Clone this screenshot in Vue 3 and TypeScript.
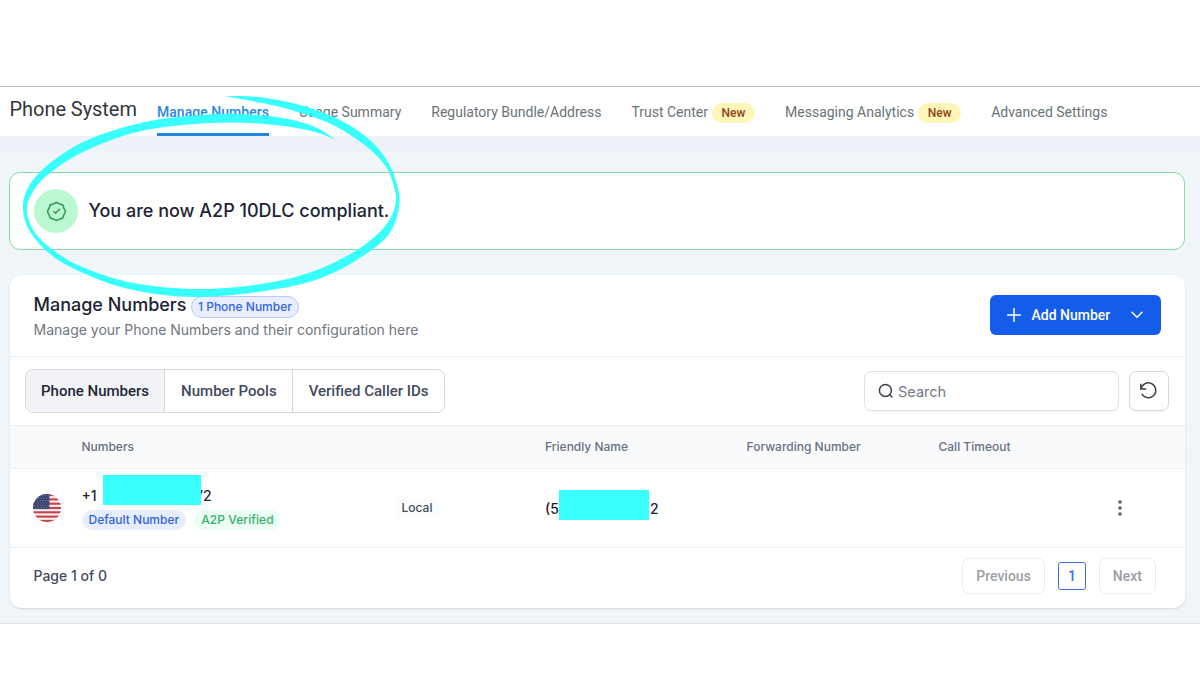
<template>
  <div class="page">
    <header class="topbar">
      <h1>Phone System</h1>
      <nav class="tabs">
        <a
          v-for="tab in tabs"
          :key="tab.label"
          class="tab"
          :class="{ active: tab.label === activeTab }"
          @click="activeTab = tab.label"
        >
          <span class="tab-label">{{ tab.label }}</span>
          <span v-if="tab.isNew" class="new-badge">New</span>
        </a>
      </nav>
    </header>

    <main class="content">
      <section class="banner">
        <span class="banner-icon">
          <svg width="21" height="21" viewBox="0 0 24 24">
            <path d="M9 12L11 14L15.5 9.5" />
            <path
              d="M7.334 3.819C8.138 3.755 8.901 3.438 9.514 2.915C10.947 1.695 13.053 1.695 14.486 2.915C15.099 3.438 15.862 3.755 16.666 3.819C18.542 3.968 20.032 5.458 20.181 7.334C20.246 8.138 20.562 8.901 21.085 9.514C22.305 10.947 22.305 13.053 21.085 14.486C20.562 15.099 20.246 15.862 20.181 16.666C20.032 18.542 18.542 20.032 16.666 20.181C15.862 20.246 15.099 20.562 14.486 21.085C13.053 22.305 10.947 22.305 9.514 21.085C8.901 20.562 8.138 20.246 7.334 20.181C5.458 20.032 3.968 18.542 3.819 16.666C3.755 15.862 3.438 15.099 2.915 14.486C1.695 13.053 1.695 10.947 2.915 9.514C3.438 8.901 3.755 8.138 3.819 7.334C3.968 5.458 5.458 3.968 7.334 3.819Z"
            />
          </svg>
        </span>
        <p>You are now A2P 10DLC compliant.</p>
      </section>

      <section class="card">
        <div class="card-header">
          <div>
            <div class="card-title">
              <h2>Manage Numbers</h2>
              <span class="count">1 Phone Number</span>
            </div>
            <p class="subtitle">Manage your Phone Numbers and their configuration here</p>
          </div>
          <button class="add-button">
            <svg width="14" height="14" viewBox="0 0 14 14"><path d="M7 .5v13M.5 7h13" /></svg>
            <span>Add Number</span>
            <svg width="12" height="8" viewBox="0 0 12 8"><path d="M1 1.2l5 5 5-5" /></svg>
          </button>
        </div>

        <div class="toolbar">
          <div class="segmented">
            <button
              v-for="view in views"
              :key="view"
              :class="{ selected: view === activeView }"
              @click="activeView = view"
            >
              {{ view }}
            </button>
          </div>
          <div class="tools">
            <div class="search">
              <svg width="16" height="16" viewBox="0 0 16 16">
                <circle cx="7.4" cy="7.4" r="6" />
                <path d="M11.8 11.8l2.2 2.2" />
              </svg>
              <span>Search</span>
            </div>
            <button class="refresh">
              <svg width="20" height="20" viewBox="0 0 20 20">
                <path d="M1.8 3.3v4.8h4.8" />
                <path d="M2.1 7.9A7.4 7.4 0 1 1 3.2 13.4" />
              </svg>
            </button>
          </div>
        </div>

        <div class="row head">
          <span></span>
          <span>Numbers</span>
          <span></span>
          <span>Friendly Name</span>
          <span>Forwarding Number</span>
          <span>Call Timeout</span>
          <span></span>
        </div>

        <div class="row body">
          <svg class="flag" width="28" height="28" viewBox="0 0 28 28">
            <clipPath id="flag-clip"><circle cx="14" cy="14" r="14" /></clipPath>
            <g clip-path="url(#flag-clip)">
              <rect width="28" height="28" fill="#f6f2f3" />
              <rect v-for="n in 7" :key="n" x="0" :y="(n - 1) * 4.31" width="28" height="2.15" fill="#c9434c" />
              <rect width="16.5" height="15.08" fill="#3a4670" />
              <template v-for="r in 6" :key="r">
                <circle v-for="c in 6" :key="c" :cx="c * 2.7 - (r % 2)" :cy="r * 2.4 - 0.7" r="0.45" fill="#b9c1d8" />
              </template>
            </g>
          </svg>
          <div class="number-cell">
            <div class="number">
              <span>+1</span>
              <i class="redacted wide"></i>
              <span class="tail">72</span>
            </div>
            <div class="pills">
              <span class="pill blue">Default Number</span>
              <span class="pill green">A2P Verified</span>
            </div>
          </div>
          <span class="local">Local</span>
          <div class="friendly">
            <span>(5</span>
            <i class="redacted"></i>
            <span>2</span>
          </div>
          <span></span>
          <span></span>
          <svg class="more" width="6" height="18" viewBox="0 0 6 18">
            <circle cx="3" cy="3" r="1.8" />
            <circle cx="3" cy="9" r="1.8" />
            <circle cx="3" cy="15" r="1.8" />
          </svg>
        </div>

        <footer class="pager">
          <span class="page-info">Page 1 of 0</span>
          <div class="pager-buttons">
            <button class="step">Previous</button>
            <button class="current">1</button>
            <button class="step">Next</button>
          </div>
        </footer>
      </section>
    </main>

    <svg class="swoosh" width="420" height="220" viewBox="0 80 420 220">
      <path :d="swoosh" fill="#38fffb" />
    </svg>
  </div>
</template>

<script setup lang="ts">
import { ref } from 'vue'

interface Tab {
  label: string
  isNew?: boolean
}

type Point = [number, number]

const tabs: Tab[] = [
  { label: 'Manage Numbers' },
  { label: 'Usage Summary' },
  { label: 'Regulatory Bundle/Address' },
  { label: 'Trust Center', isNew: true },
  { label: 'Messaging Analytics', isNew: true },
  { label: 'Advanced Settings' },
]
const views = ['Phone Numbers', 'Number Pools', 'Verified Caller IDs']

const activeTab = ref('Manage Numbers')
const activeView = ref('Phone Numbers')

// Both edges of the brush stroke, tip to tip
const outer: Point[] = [
  [225, 96], [258, 97], [300, 105], [340, 120], [371, 141], [389, 164], [397, 185], [399.5, 203],
  [393, 227], [377, 246], [333, 273], [283, 288], [200, 297], [133, 290], [83, 273], [50, 254],
  [29, 230], [23, 208], [27, 190], [40, 172], [67, 151], [100, 135], [150, 121], [200, 115],
  [240, 114], [283, 118], [315, 127], [336, 140],
]
const inner: Point[] = [
  [336, 140], [315, 132], [283, 126], [233, 122.5], [183, 125], [133, 133], [83, 152], [50, 173],
  [34, 190], [27, 208], [32, 228], [48, 246], [80, 266], [133, 283], [200, 289], [267, 283],
  [317, 270], [360, 248], [386, 225], [395.5, 204], [394, 187], [386, 167], [367, 147], [333, 125],
  [293, 110.5], [262, 103], [225, 96],
]

function smooth(points: Point[]) {
  let d = ''
  for (let i = 0; i < points.length - 1; i++) {
    const a = points[i - 1] ?? points[i]
    const b = points[i]
    const c = points[i + 1]
    const e = points[i + 2] ?? c
    d += `C${b[0] + (c[0] - a[0]) / 6} ${b[1] + (c[1] - a[1]) / 6} ${c[0] - (e[0] - b[0]) / 6} ${c[1] - (e[1] - b[1]) / 6} ${c[0]} ${c[1]}`
  }
  return d
}

const swoosh = `M225 96${smooth(outer)}${smooth(inner)}Z`
</script>

<style>
body {
  margin: 0;
  background: #fff;
}
</style>

<style scoped>
.page {
  position: relative;
  box-sizing: border-box;
  width: 1200px;
  height: 675px;
  padding-top: 86px;
  overflow: hidden;
  background: #fff;
  font-family: Inter, sans-serif;
  color: #1d2433;
}

h1,
h2,
p {
  margin: 0;
}

button {
  box-sizing: border-box;
  margin: 0;
  padding: 0;
  border: 0;
  background: #fff;
  font-family: Roboto, sans-serif;
}

svg {
  display: block;
  fill: none;
}

.topbar {
  box-sizing: border-box;
  display: flex;
  height: 50px;
  padding-left: 9.5px;
  border-top: 1px solid #bcc0c1;
  font-family: Roboto, sans-serif;
}

h1 {
  width: 147.5px;
  font-size: 20px;
  font-weight: 400;
  line-height: 44px;
  letter-spacing: -0.05px;
  white-space: nowrap;
  color: #33373b;
}

.tabs {
  display: flex;
  gap: 30px;
  height: 49px;
}

.tab {
  box-sizing: border-box;
  display: flex;
  align-items: center;
  gap: 4px;
  height: 49px;
  border-bottom: 3px solid transparent;
  font-size: 14px;
  white-space: nowrap;
  color: #6a7378;
}

.tab-label {
  margin-top: 4px;
}

.tab.active {
  font-weight: 500;
  letter-spacing: 0.03px;
  color: #2c86e4;
  border-color: #1f87dd;
}

.new-badge {
  width: 43px;
  margin-top: 5px;
  border-radius: 10px;
  background: #fdf6b8;
  font-size: 12px;
  font-weight: 500;
  line-height: 20px;
  text-align: center;
  color: #8f4518;
}

.content {
  box-sizing: border-box;
  height: 488px;
  padding: 36px 15.5px 0 9.5px;
  background: linear-gradient(#eef2f8 0, #eef2f8 14px, #f0f6fa 18px, #f0f5f9 100%);
  border-bottom: 1px solid #dde2e5;
}

.banner {
  box-sizing: border-box;
  display: flex;
  align-items: center;
  gap: 10.5px;
  height: 78px;
  margin-left: -0.5px;
  padding-left: 24px;
  border: 1px solid #84dda2;
  border-radius: 11px;
  background: #fff;
  font-size: 18px;
  font-weight: 500;
}

.banner p {
  margin-top: -2px;
}

.banner-icon {
  display: grid;
  place-items: center;
  width: 44px;
  height: 44px;
  border-radius: 50%;
  background: #bbf7d0;
}

.banner-icon svg {
  stroke: #2c9a58;
  stroke-width: 1.7;
  stroke-linecap: round;
  stroke-linejoin: round;
}

.card {
  height: 333px;
  margin-top: 25px;
  border-radius: 12px;
  background: #fff;
  box-shadow: 0 1px 2px rgba(40, 60, 80, 0.16);
}

.card-header {
  box-sizing: border-box;
  display: flex;
  justify-content: space-between;
  height: 82px;
  padding: 17px 24px 0;
  border-bottom: 1px solid #eceff2;
}

.card-title {
  display: flex;
  align-items: center;
  gap: 4.5px;
}

h2 {
  font-size: 18px;
  font-weight: 500;
  line-height: 24px;
}

.count {
  margin-top: 4px;
  padding: 0 6px;
  border: 1px solid #b7c8fa;
  border-radius: 11px;
  background: #e8edff;
  font-size: 12px;
  font-weight: 500;
  line-height: 20px;
  color: #2f65dc;
}

.subtitle {
  margin-top: 2px;
  font-size: 14px;
  line-height: 20px;
  color: #70757f;
}

.add-button {
  display: flex;
  align-items: center;
  width: 171px;
  height: 40px;
  margin-top: 3px;
  padding-left: 17px;
  border-radius: 6px;
  background: #145deb;
  font-size: 14px;
  font-weight: 500;
  color: #fff;
}

.add-button span {
  width: 99px;
  margin-left: 11px;
  text-align: left;
}

.add-button svg {
  stroke: #fff;
  stroke-width: 1.5;
  stroke-linecap: round;
  stroke-linejoin: round;
}

.toolbar {
  box-sizing: border-box;
  display: flex;
  align-items: center;
  justify-content: space-between;
  height: 69px;
  padding: 0 16px 0 15.5px;
  border-bottom: 1px solid #eceff2;
}

.segmented {
  display: flex;
  overflow: hidden;
  border: 1px solid #d5d8dc;
  border-radius: 8px;
}

.segmented button {
  height: 42px;
  padding: 0 15px 0 16px;
  border-left: 1px solid #d5d8dc;
  font-size: 15px;
  font-weight: 500;
  color: #434a5e;
}

.segmented button:first-child {
  padding-left: 15px;
  border-left: 0;
}

.segmented .selected {
  background: #f1f3f7;
  color: #222836;
}

.tools {
  display: flex;
  gap: 10px;
}

.search,
.refresh {
  box-sizing: border-box;
  height: 40px;
  border: 1px solid #e1e3e6;
  border-radius: 7px;
  box-shadow: 0 1px 1px rgba(16, 24, 40, 0.04);
}

.search {
  display: flex;
  align-items: center;
  gap: 4px;
  width: 255px;
  padding-left: 13.5px;
  font-size: 14.5px;
  color: #737a86;
}

.search svg,
.refresh svg {
  stroke: #3d4350;
  stroke-width: 1.5;
  stroke-linecap: round;
  stroke-linejoin: round;
}

.refresh {
  display: grid;
  place-items: center;
  width: 40px;
  border-color: #d5d8dc;
}

.row {
  box-sizing: border-box;
  display: grid;
  grid-template-columns: 48px 308px 155.5px 201.5px 192px 174px auto;
  align-items: center;
  padding-left: 24px;
  border-bottom: 1px solid #eceff2;
}

.head {
  height: 43px;
  padding-bottom: 1px;
  background: #f9fafc;
  font-size: 12px;
  font-weight: 500;
  color: #697182;
}

.body {
  height: 79px;
}

.flag {
  margin-left: -0.5px;
}

.number-cell {
  margin-top: -11px;
}

.number,
.friendly {
  display: flex;
  align-items: center;
  font-size: 14px;
  font-weight: 500;
}

.number {
  height: 30px;
}

.number > span:first-child {
  width: 21.5px;
  margin-top: 10px;
}

.redacted {
  width: 90px;
  height: 30px;
  background: #38fffb;
}

.redacted.wide {
  z-index: 1;
  width: 98px;
}

.tail {
  margin: 10px 0 0 -6px;
}

.pills {
  display: flex;
  gap: 8px;
  margin-top: 5px;
}

.pill {
  padding: 0 7px;
  border-radius: 10px;
  font-size: 12px;
  font-weight: 500;
  line-height: 20px;
}

.pill.blue {
  background: #e8edfe;
  color: #2f65dc;
}

.pill.green {
  background: #ecfdf3;
  letter-spacing: 0.08px;
  color: #33b06c;
}

.local {
  justify-self: start;
  margin-left: 4px;
  padding: 0 8px;
  border-radius: 10px;
  background: #fbfcfe;
  font-size: 12px;
  font-weight: 500;
  line-height: 20px;
  color: #454c5b;
}

.friendly {
  margin-top: -7px;
}

.friendly span {
  margin-top: 7px;
}

.friendly span:first-child {
  width: 14px;
}

.friendly span:last-child {
  margin-left: 1px;
}

.more {
  margin-left: 4.5px;
}

.more circle {
  fill: #5d6166;
}

.pager {
  box-sizing: border-box;
  display: flex;
  align-items: center;
  justify-content: space-between;
  height: 60px;
  padding: 0 28.5px 4px 24px;
  font-size: 14px;
  font-weight: 500;
  color: #434a5e;
}

.page-info {
  margin-top: -1px;
}

.pager-buttons {
  display: flex;
  align-items: center;
  gap: 13px;
}

.step {
  height: 36px;
  padding: 0 13px;
  border: 1px solid #eaecee;
  border-radius: 7px;
  font-size: 14px;
  font-weight: 500;
  color: #9b9ea3;
}

.current {
  width: 28px;
  height: 28px;
  border: 1px solid #3973e2;
  border-radius: 3px;
  font-size: 14px;
  font-weight: 500;
  color: #3973e2;
}

.swoosh {
  position: absolute;
  top: 80px;
  left: 0;
  z-index: 2;
}
</style>
